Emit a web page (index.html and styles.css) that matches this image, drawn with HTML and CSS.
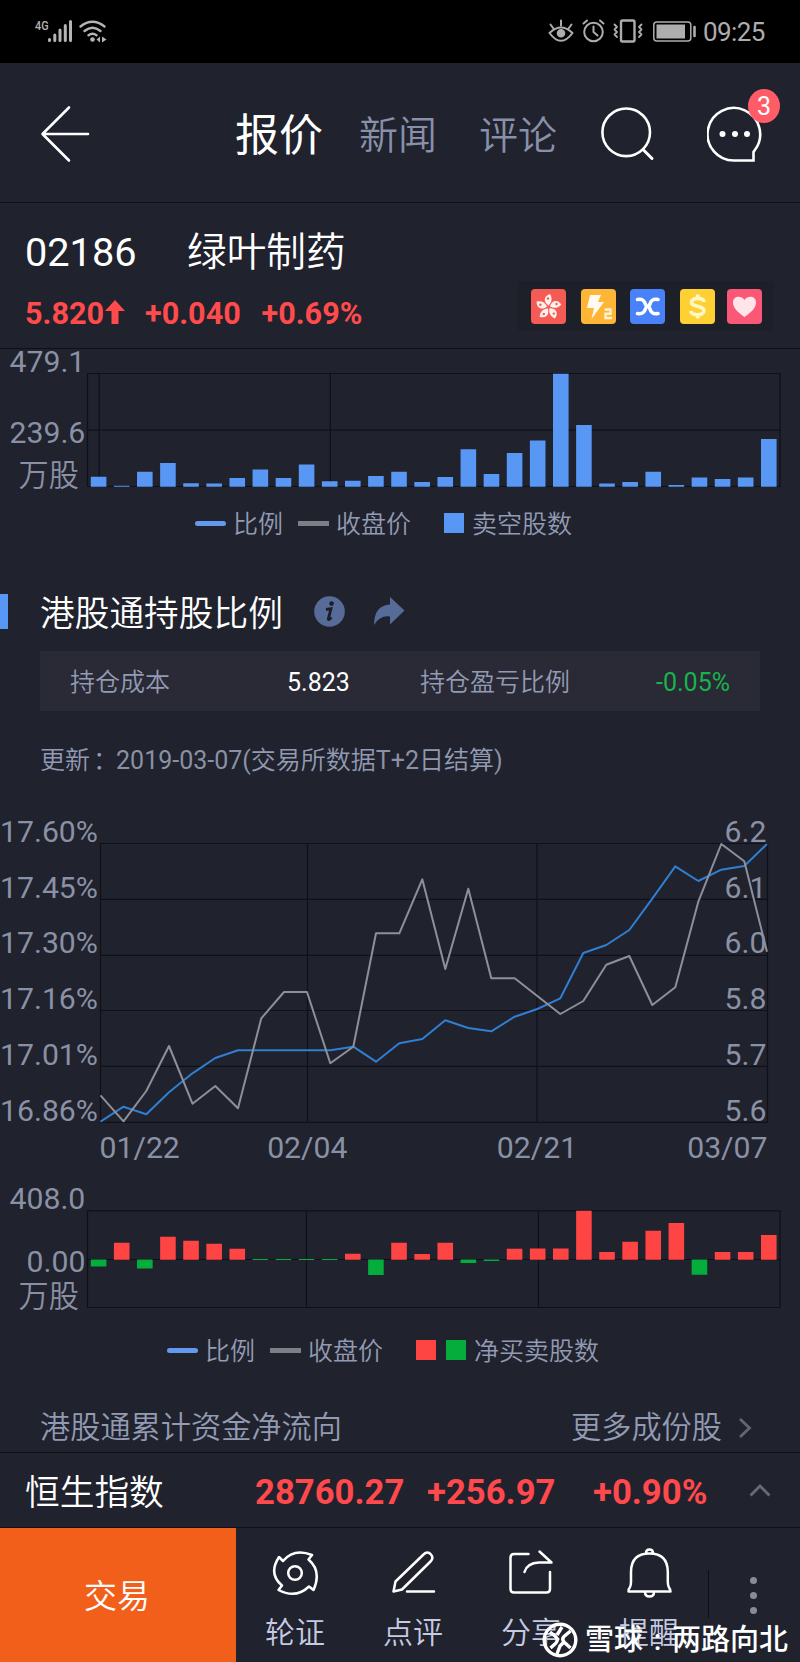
FILE: index.html
```html
<!DOCTYPE html>
<html lang="zh-CN">
<head>
<meta charset="utf-8">
<title>绿叶制药 02186</title>
<link rel="stylesheet" href="styles.css">
</head>
<body>
<div class="page">
  <header class="status">
    <svg class="status-left" viewBox="0 0 120 63" width="120" height="63">
      <text x="35" y="30" class="net" textLength="13.500" lengthAdjust="spacingAndGlyphs">4G</text>
      <g stroke="#b4b4b4" stroke-width="3" stroke-linecap="round" fill="none">
        <path d="M49.5 39.5v1M54.8 35v5.500M60 30v10.500M65.300 25.500v15M70.500 21.500v19"/>
        <path d="M80.500 26.500q12-9.500 24 0M84.500 31q8-6.500 16 0M88.500 35.200q4-3 8 0" stroke-width="2.400"/>
      </g>
      <circle cx="92.500" cy="39.500" r="2.300" fill="#b4b4b4"/>
      <path d="M96.500 39.500l3.500-3v6zM106.500 39.500l-4.500-3v6z" fill="#b4b4b4"/>
    </svg>
    <svg class="status-icons" viewBox="545 0 155 63" width="155" height="63" fill="none" stroke="#adadad" stroke-width="2" stroke-linecap="round" stroke-linejoin="round">
      <path d="M549.500 33q11.500-11 23 0q-11.500 15.500-23 0zM561 20.500v5M550.500 24.500l3 4M571.500 24.500l-3 4"/>
      <circle cx="561" cy="33.300" r="3.300" fill="#adadad"/>
      <circle cx="593.500" cy="32" r="9.300"/>
      <path d="M593.500 26.500v5.500l4 3.500M583.500 23.500l3.500-3M603.500 23.500l-3.500-3"/>
      <rect x="621" y="20.500" width="13.500" height="21" rx="1.500" stroke-width="2.400"/>
      <path d="M614.500 24.500l2.500 2.500-2.500 2.500 2.500 2.500-2.500 2.500 2.500 2.500M641.500 24.500l-2.500 2.500 2.500 2.500-2.500 2.500 2.500 2.500-2.500 2.500" stroke-width="1.800"/>
      <rect x="653.800" y="22" width="37" height="19" rx="3" stroke-width="1.500"/>
      <rect x="656.500" y="24.500" width="28.500" height="14" fill="#adadad" stroke="none"/>
      <path d="M694.500 27v9" stroke-width="2.600"/>
    </svg>
    <span class="clock">09:25</span>
  </header>

  <nav class="nav">
    <svg class="back" viewBox="0 0 50 58" width="50" height="58" fill="none" stroke="#fff" stroke-width="2.600" stroke-linecap="round" stroke-linejoin="round"><path d="M29 2.500L2.500 29L29 55.500M2.500 29H48"/></svg>
    <span class="tab active">报价</span>
    <span class="tab second">新闻</span>
    <span class="tab third">评论</span>
    <svg class="search" viewBox="0 0 54 54" width="54" height="54" fill="none" stroke="#fff" stroke-width="2.600" stroke-linecap="round"><circle cx="25.200" cy="25.300" r="23.800"/><path d="M42 42.500l9 9" stroke-width="3"/></svg>
    <div class="chat">
      <svg viewBox="0 0 56 58" width="56" height="58"><path d="M47.500 45.500A26.300 26.300 0 1 0 28 55.500H46.500V47Z" fill="none" stroke="#fff" stroke-width="2.600" stroke-linejoin="miter"/><g fill="#fff"><circle cx="15.500" cy="29" r="3"/><circle cx="28" cy="29" r="3"/><circle cx="40" cy="29" r="3"/></g></svg>
      <span class="badge">3</span>
    </div>
  </nav>

  <section class="quote">
    <div class="quote-name"><span class="code">02186</span><span>绿叶制药</span></div>
    <div class="quote-row">
      <span class="price">5.820</span>
      <svg class="up" viewBox="0 0 20 24" width="20" height="24"><path d="M10 0L20 11H13.500V24H6.500V11H0Z" fill="#ff4b4b"/></svg>
      <span class="change">+0.040</span><span class="percent">+0.69%</span>
    </div>
    <div class="tags">
      <svg class="tag" viewBox="0 0 35 35" width="35" height="35"><rect width="35" height="35" rx="4" fill="#f45b54"/><g fill="#fff0ed"><path d="M17.500 16.500C12 13 12.500 7 19 5C21.500 9 21 13 17.500 16.500Z"/><path d="M17.500 16.500C12 13 12.500 7 19 5C21.500 9 21 13 17.500 16.500Z" transform="rotate(72 17.500 18)"/><path d="M17.500 16.500C12 13 12.500 7 19 5C21.500 9 21 13 17.500 16.500Z" transform="rotate(144 17.500 18)"/><path d="M17.500 16.500C12 13 12.500 7 19 5C21.500 9 21 13 17.500 16.500Z" transform="rotate(216 17.500 18)"/><path d="M17.500 16.500C12 13 12.500 7 19 5C21.500 9 21 13 17.500 16.500Z" transform="rotate(288 17.500 18)"/></g><g fill="#f45b54"><circle cx="17" cy="9.500" r="1.200"/><circle cx="25.500" cy="15" r="1.200"/><circle cx="22.800" cy="24.600" r="1.200"/><circle cx="12.800" cy="25" r="1.200"/><circle cx="9.400" cy="15.800" r="1.200"/></g></svg>
      <svg class="tag" viewBox="0 0 35 35" width="35" height="35"><rect width="35" height="35" rx="4" fill="#ffb535"/><path d="M9 6H20L17 13H23L10.500 30L13 19H6Z" fill="#fffaf0"/><path d="M23.500 20.500H29.500V24.700H24.500V29H31" fill="none" stroke="#fff2cf" stroke-width="2.400"/></svg>
      <svg class="tag" viewBox="0 0 35 35" width="35" height="35"><rect width="35" height="35" rx="4" fill="#4982f8"/><path d="M7.500 10.500C17 9 14 17.500 17.700 17.500C21.500 17.500 18 9 28 10.500M7.500 24.500C17 26 14 17.500 17.700 17.500C21.500 17.500 18 26 28 24.500" fill="none" stroke="#fff" stroke-width="3.600" stroke-linecap="round"/></svg>
      <svg class="tag" viewBox="0 0 35 35" width="35" height="35"><rect width="35" height="35" rx="4" fill="#ffd034"/><path d="M24 13C24 8.500 11.500 8 11.500 13.200C11.500 18.500 24 16 24 21.800C24 27 11.300 27 10.800 22M17.700 5.500V9M17.700 26V29.500" fill="none" stroke="#fff7c4" stroke-width="3.700"/></svg>
      <svg class="tag last" viewBox="0 0 35 35" width="35" height="35"><rect width="35" height="35" rx="4" fill="#fb5878"/><path d="M17.500 28C13 24.500 6 20 6 13.500C6 7 14 6 17.500 11C21 6 29 7 29 13.500C29 20 22 24.500 17.500 28Z" fill="#ffe5ea"/></svg>
    </div>
  </section>

  <main>
    <svg class="chart" viewBox="0 349 800 148" width="800" height="148">
      <g class="grid"><path d="M87.500 373.500H780V486.500H87.500ZM87.500 430.200H780M99.200 373.500V486.500M330.300 373.500V486.500"/></g>
      <path class="bars blue" d="M98.600 486.700v-10m23.110 10v-1m23.110 1v-15m23.110 15v-23.700m23.110 23.700v-3.500m23.110 3.500v-3.300m23.110 3.300v-8.700m23.110 8.700v-17.300m23.110 17.300v-8.700m23.110 8.700v-22.300m23.110 22.300v-5.500m23.110 5.500v-6m23.110 6v-10.700m23.110 10.700v-15m23.110 15v-4.700m23.110 4.700v-9.700m23.110 9.700v-37.500m23.110 37.500v-12.700m23.110 12.700v-33.700m23.110 33.700v-46.300m23.110 46.300v-113m23.110 113v-61.700m23.110 61.700v-3.300m23.110 3.300v-4.700m23.110 4.700v-15m23.110 15v-1.700m23.110 1.700v-9.300m23.110 9.300v-7.700m23.110 7.700v-9.300m23.110 9.300v-47.700"/>
      <g class="axis"><text x="9.500" y="372.200">479.1</text><text x="9.500" y="442.500">239.6</text><text class="unit" x="18.500" y="485.500">万股</text></g>
    </svg>
    <div class="legend first"><i class="line"></i><span class="ratio">比例</span><i class="line gray"></i><span class="close">收盘价</span><i class="box"></i><span>卖空股数</span></div>

    <div class="title">
      <h2>港股通持股比例</h2>
      <svg class="info" viewBox="0 0 31 31" width="31" height="31"><circle cx="15.500" cy="15.500" r="15.300" fill="#566b98"/><circle cx="17.600" cy="7.600" r="2.300" fill="#1b1e29"/><path d="M12 13.500L17 12.700L14.300 23Q14.500 24.500 17.500 21.500" fill="none" stroke="#1b1e29" stroke-width="2.800"/></svg>
      <svg class="share" viewBox="0 0 31 29" width="31" height="29"><path d="M16 0L30.500 13.500L16 27.500V19.500Q6 18 0 28Q0 8.500 16 7.500Z" fill="#566b98"/></svg>
    </div>
    <div class="cost"><span>持仓成本</span><b>5.823</b><span>持仓盈亏比例</span><em>-0.05%</em></div>
    <p class="updated">更新<span class="colon">：</span><span class="latin">2019-03-07(</span>交易所数据<span class="latin">T+2</span>日结算<span class="latin">)</span></p>

    <svg class="chart" viewBox="0 800 800 370" width="800" height="370">
      <g class="grid"><path d="M100.500 843.500H767.500V1122.300H100.500ZM100.500 899.300H767.500M100.500 955.300H767.500M100.500 1010.500H767.500M100.500 1066.300H767.500M307.500 843.500V1122M537 843.500V1122"/></g>
      <polyline class="trend ratio-line" points="100.500,1121.700 123.500,1106.700 146.300,1114.300 169,1092.300 192.500,1073.300 215.300,1058 238,1050.300 330.300,1050.300 353.300,1046.700 376,1061.700 399.300,1043.300 422.300,1039 445.300,1020.300 468.300,1028 491.300,1031.300 514.700,1016.700 537.300,1009 560.300,998.300 583.300,953 606.300,945 629.300,930 652.300,898.700 675.300,866.300 698.300,881 721.300,869.700 744.300,866 767,844"/>
      <polyline class="trend close-line" points="100.500,1095.300 123.500,1121.300 146.300,1091 169,1046 192.500,1103.700 215.300,1086 238,1108.300 261.300,1018.300 284,992 307,992 330.300,1063.300 353.300,1046.700 376,933.300 399.300,933.300 422.300,879.300 445.300,969 468.300,888.700 491.300,978.300 514.700,978.300 537.300,996 560.300,1014 583.300,1001 606.300,964.700 629.300,956 652.300,1005 675.300,987.300 698.300,901.700 721.300,844 744.300,861.300 767,951.700"/>
      <g class="axis">
        <text x="0" y="841.700">17.60%</text><text x="0" y="897.500">17.45%</text><text x="0" y="953.200">17.30%</text><text x="0" y="1009.300">17.16%</text><text x="0" y="1065">17.01%</text><text x="0" y="1120.700">16.86%</text>
        <g text-anchor="end"><text x="766.500" y="841.700">6.2</text><text x="766.500" y="897.500">6.1</text><text x="766.500" y="953.200">6.0</text><text x="766.500" y="1009.300">5.8</text><text x="766.500" y="1065">5.7</text><text x="766.500" y="1120.700">5.6</text><text x="767.500" y="1157.500">03/07</text></g>
        <text x="99.500" y="1157.500">01/22</text><text x="307.300" y="1157.500" text-anchor="middle">02/04</text><text x="537" y="1157.500" text-anchor="middle">02/21</text>
      </g>
    </svg>

    <svg class="chart" viewBox="0 1170 800 150" width="800" height="150">
      <g class="grid"><path d="M87.500 1210.800H780V1307.500H87.500ZM87.500 1259.500H780M306.500 1210.800V1307.500M538.500 1210.800V1307.500"/></g>
      <path class="bars red" d="M121.710 1259.800v-17m46.220 17v-23m23.110 23v-19m23.110 19v-16m23.110 16v-11m115.550 11v-6m46.220 6v-17m23.110 17v-5.700m23.110 5.700v-17m69.330 17v-11m23.110 11v-11.300m23.110 11.300v-11.300m23.110 11.300v-49m23.110 49v-7.700m23.110 7.700v-18m23.110 18v-29m23.110 29v-36.700m46.220 36.700v-7.700m23.110 7.700v-7.700m23.110 7.700v-24.700"/>
      <path class="bars green" d="M98.600 1259.500v7m46.220-7v9m115.550-9.500v1m23.110-1v1m23.110-1v1m23.110-1v1m46.220-.5v15.500m92.440-15.500v3.500m23.110-3.500v1.500m207.990-1.500v15.300"/>
      <g class="axis"><text x="9.500" y="1209.200">408.0</text><text x="26.500" y="1272.300">0.00</text><text class="unit" x="18.500" y="1306.500">万股</text></g>
    </svg>
    <div class="legend second"><i class="line"></i><span class="ratio">比例</span><i class="line gray"></i><span class="close">收盘价</span><i class="box buy"></i><i class="box sell"></i><span>净买卖股数</span></div>

    <div class="flow"><span>港股通累计资金净流向</span><span class="more">更多成份股</span><svg viewBox="0 0 14 22" width="14" height="22"><path d="M2 2L11.500 11L2 20" fill="none" stroke="#616675" stroke-width="2.800"/></svg></div>
  </main>

  <section class="index"><span class="index-name">恒生指数</span><b class="value">28760.27</b><b class="delta">+256.97</b><b class="rate">+0.90%</b><svg viewBox="0 0 22 14" width="22" height="14"><path d="M1.500 12.500L11 3L20.500 12.500" fill="none" stroke="#656975" stroke-width="3"/></svg></section>

  <footer class="actions">
    <div class="trade">交易</div>
    <div class="action"><svg viewBox="0 0 50 54" width="50" height="54"><path d="M9 10L13 14Q24 1 42 8L38.500 12.500Q52 24 43.500 43L39 39.500Q26 52 8.500 43L12 38.500Q-2 27 9 10Z"/><circle cx="25" cy="26" r="6.800"/></svg><span>轮证</span></div>
    <div class="action"><svg viewBox="0 0 50 54" width="50" height="54"><path d="M5.500 44.500L7.500 34.500L35.500 7.500Q39.500 3.500 43 7.500Q46 11 42.500 14.500L14 42.500ZM19 44.500H46"/></svg><span>点评</span></div>
    <div class="action"><svg viewBox="0 0 50 54" width="50" height="54"><path d="M22.500 7H8Q4.500 7 4.500 10.500V42Q4.500 45.500 8 45.500H40.500Q44 45.500 44 42V25M18.500 25Q21 16 33 15.500H45.500L33.500 4.500"/></svg><span>分享</span></div>
    <div class="action"><svg viewBox="0 0 50 54" width="50" height="54"><path d="M4.500 44.500H46.500Q46.500 42.500 45 40.500Q43.800 38.500 43.800 35V25Q43.800 6.500 25.500 6.500Q7 6.500 7 25V35Q7 38.500 5.800 40.500Q4 42.500 4.500 44.500ZM22 6Q22 2.500 25.500 2.500Q29 2.500 29 6M21 45Q21 49.500 25.500 49.500Q30 49.500 30 45"/></svg><span>提醒</span></div>
    <div class="menu"><i></i><i></i><i></i></div>
    <div class="watermark"><svg viewBox="0 0 36 36" width="36" height="36" fill="none" stroke="#fff"><circle cx="18" cy="18" r="15.800" stroke-width="3.400"/><path d="M8 10L13.500 14.500Q17 18 13.500 21.500L8.500 26M15 32L18 24L22.500 19.500M28.500 9L22 14.500Q19.500 17 22 20L28.500 26M15 13L20 5" stroke-width="3.400"/></svg><span>雪球</span><span class="dots">:</span><span>两路向北</span></div>
  </footer>
</div>
</body>
</html>
```
FILE: styles.css
```css
* { box-sizing: border-box; }
body { margin: 0; background: #20222d; font-family: Roboto, "Noto Sans CJK SC", sans-serif; font-weight: 350; color: #929bb3; }
svg { display: block; flex: none; }
.page { width: 800px; height: 1662px; overflow: hidden; background: #20222d; }
.status { height: 63px; background: #000; display: flex; align-items: center; }
.status-icons { margin-left: 425px; }
.net { font: 500 13px Roboto, sans-serif; fill: #b4b4b4; }
.clock { margin-left: 3px; padding-top: 1px; font-size: 26px; font-weight: 400; color: #adadad; letter-spacing: -.6px; line-height: 62px; }
.nav { height: 140px; display: flex; align-items: center; padding: 7px 0 5px 40px; border-bottom: 1px solid #0d0f19; }
.tab { padding-top: 4px; font-size: 39px; line-height: 60px; white-space: nowrap; color: #8890aa; }
.tab.active { margin-left: 145px; width: 90px; font-size: 44px; font-weight: 400; color: #fff; }
.second { margin-left: 34px; width: 80px; }
.third { margin-left: 40px; width: 80px; }
.search { margin-left: 42px; }
.chat { position: relative; margin-left: 52px; }
.badge { position: absolute; left: 41px; top: -16px; width: 32px; height: 34px; border-radius: 50%; background: #ff5c67; color: #fff; font-size: 25px; font-weight: 400; line-height: 35px; text-align: center; }
.quote { position: relative; height: 146px; padding: 19px 25px 0; border-bottom: 1px solid #0d0f19; }
.quote-name { display: flex; color: #fff; font-size: 39.7px; line-height: 62px; height: 60px; }
.code { width: 162px; font-weight: 400; }
.quote-row { display: flex; align-items: center; height: 62px; font-size: 30.6px; font-weight: 700; color: #ff4b4b; }
.up { margin-bottom: 2px; }
.price { width: 80px; }
.change { margin-left: 20px; width: 116.500px; }
.tags { position: absolute; left: 518px; top: 78px; width: 256px; height: 50px; padding: 8px 13px; display: flex; gap: 14.500px; background: #1d1f29; }
.tag.last { margin-left: -2px; }
.chart { overflow: visible; }
.grid path { fill: none; stroke: #0e101a; stroke-width: 1.2; }
.bars { fill: none; stroke-width: 15.6; }
.blue { stroke: #5897f3; }
.red { stroke: #ff4444; }
.green { stroke: #04ad3c; }
.axis { font-family: Roboto, "Noto Sans CJK SC", sans-serif; font-size: 30.2px; fill: #8a91a5; font-weight: 400; }
.unit { font-weight: 350; }
.trend { fill: none; stroke-width: 2; stroke-linejoin: round; }
.ratio-line { stroke: #2f7fd2; }
.close-line { stroke: #8e9099; }
.legend { display: flex; align-items: center; height: 52px; font-size: 25px; line-height: 48px; white-space: nowrap; }
.legend span { padding-top: 4px; }
.first { padding-left: 195px; }
.legend.second { margin: 4px 0 0; padding-left: 167px; width: auto; }
.line { width: 31px; height: 5px; border-radius: 3px; background: #639aef; margin-right: 7px; }
.gray { background: #7d7e86; border-radius: 0; }
.ratio { width: 65px; }
.close { width: 108px; }
.box { width: 20px; height: 20px; background: #5897f3; margin-right: 8px; }
.buy { background: #ff4444; margin-right: 10px; }
.sell { background: #04ad3c; }
.title { height: 35px; margin-top: 45px; border-left: 8px solid #5897f3; padding-left: 32px; display: flex; align-items: center; }
.title h2 { margin: 0; padding-top: 5px; width: 274px; color: #fff; font-size: 34.700px; font-weight: 350; line-height: 35px; }
.share { margin-left: 29px; }
.cost { height: 60px; margin: 22px 40px 0; padding: 3px 30px 0; background: #292a35; display: grid; grid-template-columns: 174px 104px 1fr auto; align-items: center; font-size: 25px; line-height: 57px; }
.cost b { padding-left: 43px; color: #fff; font-weight: 400; }
.cost span:nth-child(3) { padding-left: 72px; }
.cost em { color: #18b34b; font-style: normal; font-weight: 400; }
.updated { height: 89px; margin: 0; padding: 25px 40px 0; font-size: 25px; line-height: 50px; white-space: nowrap; }
.latin { font-weight: 400; color: #8a91a5; }
.colon { margin-left: 3px; margin-right: -2px; }
.flow { height: 77px; display: flex; align-items: center; padding: 27px 48px 0 40px; font-size: 30.200px; line-height: 50px; border-bottom: 1px solid #0d0f19; }
.flow span { padding-top: 1px; }
.more { margin-left: auto; margin-right: 16px; }
.index { height: 75px; padding: 2px 29px 0 25px; display: flex; align-items: center; color: #ff494c; border-bottom: 1px solid #0d0f19; font-size: 34.700px; line-height: 72px; white-space: nowrap; }
.index-name { width: 230px; padding-top: 3px; color: #fff; }
.index b { font-weight: 700; padding-top: 1px; }
.value { width: 172px; }
.delta { width: 166px; }
.index svg { margin-left: auto; margin-bottom: 2px; }
.actions { position: relative; height: 134px; display: flex; }
.trade { width: 236px; padding-right: 2px; background: #f15f1b; color: #fff; font-size: 33px; line-height: 137px; text-align: center; }
.action { width: 118px; padding-top: 19px; display: flex; flex-direction: column; align-items: center; color: #c4cbe2; font-size: 30px; line-height: 44px; }
.action svg { fill: none; stroke: #fff; stroke-width: 2.5; stroke-linejoin: round; stroke-linecap: round; margin-bottom: 10px; }
.menu { flex: 1; height: 48px; margin-top: 42px; border-left: 1px solid #0d0f19; display: flex; flex-direction: column; align-items: center; gap: 8px; padding: 7px 2px 0 0; }
.menu i { flex: none; width: 7px; height: 7px; border-radius: 50%; background: #8b8c91; }
.watermark { position: absolute; left: 542px; top: 93px; display: flex; align-items: center; color: #fff; font-size: 29px; line-height: 38px; font-weight: 500; white-space: nowrap; }
.watermark svg { margin-right: 7px; }
.watermark .dots { width: 29px; text-align: center; }
```
